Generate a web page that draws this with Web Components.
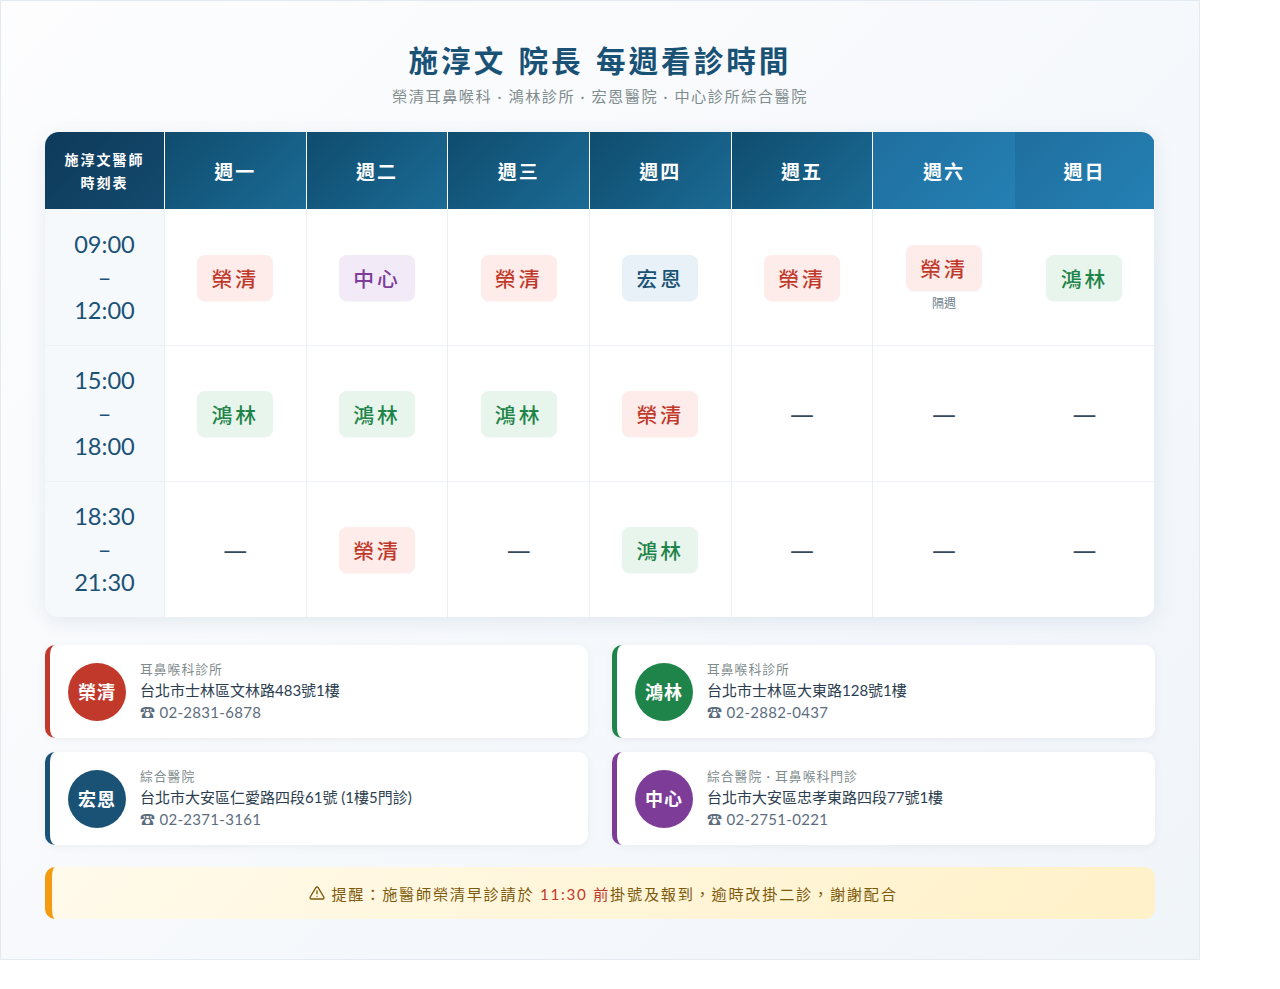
<!DOCTYPE html>
<html lang="zh-Hant">
<head>
<meta charset="utf-8">
<title>每週看診時間</title>
<style>
  html, body { margin: 0; background: #fff; }
  body { font-family: Lato, "Noto Sans CJK TC", "DejaVu Sans", sans-serif; }
</style>
</head>
<body>
<schedule-page>
  <page-header slot="header" title="施淳文 院長 每週看診時間" subtitle="榮清耳鼻喉科 · 鴻林診所 · 宏恩醫院 · 中心診所綜合醫院"></page-header>
  <schedule-table slot="table"></schedule-table>
  <clinic-card slot="cards" color="#c0392b" name="榮清" kind="耳鼻喉科診所" address="台北市士林區文林路483號1樓" phone="02-2831-6878"></clinic-card>
  <clinic-card slot="cards" color="#1e8449" name="鴻林" kind="耳鼻喉科診所" address="台北市士林區大東路128號1樓" phone="02-2882-0437"></clinic-card>
  <clinic-card slot="cards" color="#1a5276" name="宏恩" kind="綜合醫院" address="台北市大安區仁愛路四段61號 (1樓5門診)" phone="02-2371-3161"></clinic-card>
  <clinic-card slot="cards" color="#7d3c98" name="中心" kind="綜合醫院 · 耳鼻喉科門診" address="台北市大安區忠孝東路四段77號1樓" phone="02-2751-0221"></clinic-card>
  <notice-bar slot="notice">提醒：施醫師榮清早診請於 <b>11:30 前</b>掛號及報到，逾時改掛二診，謝謝配合</notice-bar>
</schedule-page>

<script>
class SchedulePage extends HTMLElement {
  constructor() {
    super();
    this.attachShadow({ mode: 'open' });
    this.shadowRoot.innerHTML = `
      <style>
        :host {
          display: block;
          box-sizing: border-box;
          width: 1200px;
          height: 960px;
          padding: 44px 44px 0;
          border: 1px solid #e3eaf1;
          background: linear-gradient(135deg, #fdfdfe 0%, #f0f5fa 100%);
        }
        .cards {
          display: grid;
          grid-template-columns: 1fr 1fr;
          gap: 14px 24px;
          margin: 28px 0 22px;
        }
      </style>
      <slot name="header"></slot>
      <slot name="table"></slot>
      <div class="cards"><slot name="cards"></slot></div>
      <slot name="notice"></slot>
    `;
  }
}

class PageHeader extends HTMLElement {
  constructor() {
    super();
    this.attachShadow({ mode: 'open' });
  }
  connectedCallback() {
    this.shadowRoot.innerHTML = `
      <style>
        :host { display: flow-root; text-align: center; height: 87px; }
        h1 {
          margin: -2px 0 0;
          font-size: 29.6px;
          line-height: 36px;
          font-weight: 700;
          letter-spacing: 3px;
          word-spacing: 2px;
          color: #1a5276;
        }
        p {
          margin: 6px 0 0;
          font-size: 15.2px;
          line-height: 22px;
          letter-spacing: 1.5px;
          color: #7f8c8d;
        }
      </style>
      <h1>${this.getAttribute('title')}</h1>
      <p>${this.getAttribute('subtitle')}</p>
    `;
  }
}

const CLINIC_STYLES = {
  '榮清': ['#fdecea', '#c0392b'],
  '鴻林': ['#e8f5ec', '#1e8449'],
  '宏恩': ['#e8f1f8', '#1a5276'],
  '中心': ['#f3eaf8', '#7d3c98'],
};

class ClinicTag extends HTMLElement {
  constructor() {
    super();
    this.attachShadow({ mode: 'open' });
  }
  connectedCallback() {
    const name = this.getAttribute('name');
    const [bg, fg] = CLINIC_STYLES[name];
    const note = this.getAttribute('note');
    this.shadowRoot.innerHTML = `
      <style>
        :host { display: flex; flex-direction: column; align-items: center; }
        .tag {
          box-sizing: border-box;
          width: 76px;
          height: 46px;
          display: flex;
          align-items: center;
          justify-content: center;
          border-radius: 8px;
          font-size: 20.8px;
          font-weight: 500;
          letter-spacing: 3px;
          background: ${bg};
          color: ${fg};
          box-shadow: 0 1px 2px rgba(0, 0, 0, 0.04);
        }
        .note { margin-top: 5px; font-size: 12px; line-height: 15px; color: #6b7b8a; }
      </style>
      <div class="tag">${name}</div>
      ${note ? `<div class="note">${note}</div>` : ''}
    `;
  }
}

const DAYS = ['週一', '週二', '週三', '週四', '週五', '週六', '週日'];
const ROWS = [
  { time: ['09:00', '12:00'], cells: ['榮清', '中心', '榮清', '宏恩', '榮清', '榮清|隔週', '鴻林'] },
  { time: ['15:00', '18:00'], cells: ['鴻林', '鴻林', '鴻林', '榮清', '', '', ''] },
  { time: ['18:30', '21:30'], cells: ['', '榮清', '', '鴻林', '', '', ''] },
];

class ScheduleTable extends HTMLElement {
  constructor() {
    super();
    this.attachShadow({ mode: 'open' });
  }
  connectedCallback() {
    const head = DAYS.map((d, i) => `<div class="day${i > 4 ? ' weekend' : ''}">${d}</div>`).join('');
    const body = ROWS.map((row) => `
      <div class="time">${row.time[0]}<br>–<br>${row.time[1]}</div>
      ${row.cells.map((c) => {
        if (!c) return '<div class="cell"><span class="none">—</span></div>';
        const [name, note] = c.split('|');
        return `<div class="cell"><clinic-tag name="${name}"${note ? ` note="${note}"` : ''}></clinic-tag></div>`;
      }).join('')}
    `).join('');
    this.shadowRoot.innerHTML = `
      <style>
        :host {
          display: grid;
          grid-template-columns: 120px repeat(6, 141.667px) 140px;
          grid-template-rows: 77px 137px 136px 135px;
          border-radius: 14px;
          overflow: hidden;
          background: #fff;
          box-shadow: 0 4px 20px rgba(26, 82, 118, 0.1);
        }
        .corner {
          display: flex;
          align-items: center;
          justify-content: center;
          text-align: center;
          font-size: 14px;
          font-weight: 700;
          line-height: 23px;
          letter-spacing: 2px;
          color: #fff;
          background: linear-gradient(135deg, #0e3a5a, #134a6e);
          border-right: 1px solid #fff;
          box-sizing: border-box;
        }
        .day {
          display: flex;
          align-items: center;
          justify-content: center;
          font-size: 19px;
          font-weight: 700;
          letter-spacing: 2px;
          color: #fff;
          border-right: 1px solid #fff;
          background: linear-gradient(135deg, #0f4c6e, #1b6b95);
        }
        .day.weekend { background: linear-gradient(135deg, #1f6f9f, #2580b3); }
        .day:nth-child(8) { border-right: 0; }
        .time, .cell {
          display: flex;
          align-items: center;
          justify-content: center;
          box-sizing: border-box;
          padding-top: 1px;
          border-right: 1px solid #eaeff4;
          border-bottom: 1px solid #eef2f6;
        }
        .time {
          padding: 0;
          text-align: center;
          font-size: 23.6px;
          line-height: 33px;
          color: #1a5276;
          background: #f6f9fc;
        }
        .cell:nth-child(8n + 8) { border-right: 0; }
        .cell:nth-last-child(-n + 7), .time:nth-last-child(8) { border-bottom: 0; }
        .none { display: block; padding-top: 2px; font-family: "DejaVu Sans", sans-serif; font-size: 24px; color: #34495e; }
      </style>
      <div class="corner"><span>施淳文醫師<br>時刻表</span></div>
      ${head}
      ${body}
    `;
  }
}

class ClinicCard extends HTMLElement {
  constructor() {
    super();
    this.attachShadow({ mode: 'open' });
  }
  connectedCallback() {
    const color = this.getAttribute('color');
    this.shadowRoot.innerHTML = `
      <style>
        :host {
          display: flex;
          align-items: center;
          gap: 14px;
          box-sizing: border-box;
          height: 93px;
          padding: 0 18px;
          background: #fff;
          border-left: 5px solid ${color};
          border-radius: 10px;
          box-shadow: 0 2px 10px rgba(0, 0, 0, 0.05);
        }
        .badge {
          width: 58px;
          height: 58px;
          flex: none;
          box-sizing: border-box;
          padding-bottom: 2px;
          border-radius: 50%;
          display: flex;
          align-items: center;
          justify-content: center;
          font-size: 18px;
          font-weight: 700;
          letter-spacing: 1px;
          color: #fff;
          background: ${color};
        }
        .info { padding-bottom: 2px; }
        .kind { font-size: 12.8px; line-height: 18px; letter-spacing: 1px; color: #7f8c8d; }
        .addr { font-size: 15px; line-height: 24px; color: #2c3e50; }
        .tel { font-size: 15px; line-height: 20px; letter-spacing: 0.3px; color: #5d6d7e; }
      </style>
      <div class="badge">${this.getAttribute('name')}</div>
      <div class="info">
        <div class="kind">${this.getAttribute('kind')}</div>
        <div class="addr">${this.getAttribute('address')}</div>
        <div class="tel">☎ ${this.getAttribute('phone')}</div>
      </div>
    `;
  }
}

class NoticeBar extends HTMLElement {
  constructor() {
    super();
    this.attachShadow({ mode: 'open' });
    this.shadowRoot.innerHTML = `
      <style>
        :host {
          display: flex;
          align-items: center;
          justify-content: center;
          gap: 6px;
          box-sizing: border-box;
          height: 52px;
          font-size: 15.2px;
          letter-spacing: 1.72px;
          color: #7d5a0b;
          background: linear-gradient(135deg, #fffaeb, #fff1c8);
          border-left: 7px solid #f39c12;
          border-radius: 10px;
        }
        ::slotted(b) { font-weight: 400; color: #c0392b; }
        svg { flex: none; }
      </style>
      <svg width="16" height="16" viewBox="0 0 24 24" fill="none" stroke="currentColor" stroke-width="2" stroke-linecap="round" stroke-linejoin="round">
        <path d="M10.3 3.9 1.8 18a2 2 0 0 0 1.7 3h17a2 2 0 0 0 1.7-3L13.7 3.9a2 2 0 0 0-3.4 0z"/>
        <path d="M12 9v4"/><path d="M12 17h.01"/>
      </svg>
      <span><slot></slot></span>
    `;
  }
}

customElements.define('schedule-page', SchedulePage);
customElements.define('page-header', PageHeader);
customElements.define('clinic-tag', ClinicTag);
customElements.define('schedule-table', ScheduleTable);
customElements.define('clinic-card', ClinicCard);
customElements.define('notice-bar', NoticeBar);
</script>
</body>
</html>
